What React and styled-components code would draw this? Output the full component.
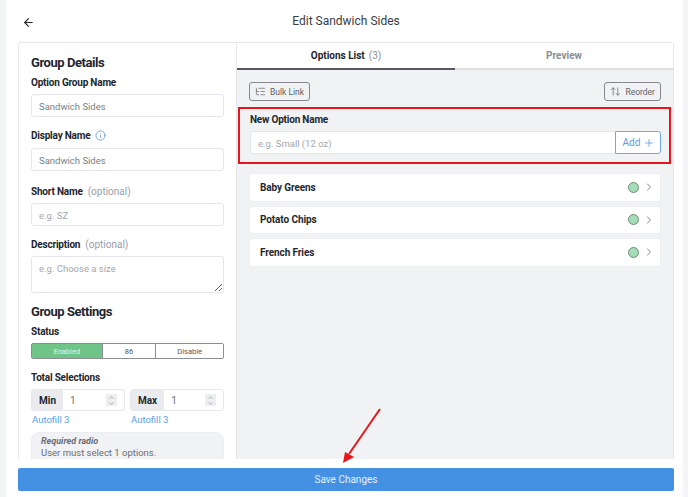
import React from 'react'
import styled, { createGlobalStyle } from 'styled-components'
import { ArrowLeft, ArrowUpDown, ChevronDown, ChevronRight, ChevronUp, Info, ListTree, Plus } from 'lucide-react'

const options = ['Baby Greens', 'Potato Chips', 'French Fries']
const statuses = [
  { label: 'Enabled', grow: 71, active: true },
  { label: '86', grow: 54 },
  { label: 'Disable', grow: 68 },
]

const NumberField = ({ label }) => (
  <NumberBox>
    <Addon>{label}</Addon>
    <NumberInput defaultValue="1" />
    <Spinner>
      <ChevronUp size={7} strokeWidth={2} />
      <ChevronDown size={7} strokeWidth={2} />
    </Spinner>
  </NumberBox>
)

export default function App() {
  return (
    <Page>
      <GlobalStyle />
      <Sheet>
        <Header>
          <BackButton>
            <ArrowLeft size={13} strokeWidth={2} />
          </BackButton>
          <PageTitle>Edit Sandwich Sides</PageTitle>
        </Header>
        <Card>
          <Sidebar>
            <SectionTitle>Group Details</SectionTitle>
            <Label $top={4}>Option Group Name</Label>
            <TextInput defaultValue="Sandwich Sides" />
            <Label $bottom={6}>
              Display Name
              <InfoIcon>
                <Info size={11} strokeWidth={1.6} />
              </InfoIcon>
            </Label>
            <TextInput defaultValue="Sandwich Sides" />
            <Label $top={13}>
              Short Name <Optional>(optional)</Optional>
            </Label>
            <TextInput placeholder="e.g. SZ" />
            <Label>
              Description <Optional>(optional)</Optional>
            </Label>
            <TextArea placeholder="e.g. Choose a size" />
            <SectionTitle $spaced>Group Settings</SectionTitle>
            <Label $top={4}>Status</Label>
            <Segments>
              {statuses.map((s) => (
                <Segment key={s.label} $grow={s.grow} $active={s.active}>
                  {s.label}
                </Segment>
              ))}
            </Segments>
            <Label>Total Selections</Label>
            <NumberRow>
              <NumberColumn>
                <NumberField label="Min" />
                <Autofill>Autofill 3</Autofill>
              </NumberColumn>
              <NumberColumn>
                <NumberField label="Max" />
                <Autofill>Autofill 3</Autofill>
              </NumberColumn>
            </NumberRow>
            <Hint>
              <HintTitle>Required radio</HintTitle>
              <HintText>User must select 1 options.</HintText>
            </Hint>
          </Sidebar>
          <Main>
            <Tabs>
              <Tab $active>
                Options List <TabCount>(3)</TabCount>
              </Tab>
              <Tab>Preview</Tab>
            </Tabs>
            <Toolbar>
              <ToolButton>
                <ListTree size={11} strokeWidth={1.5} />
                Bulk Link
              </ToolButton>
              <ToolButton>
                <ArrowUpDown size={11} strokeWidth={1.5} />
                Reorder
              </ToolButton>
            </Toolbar>
            <NewOption>
              <Label $top={3}>New Option Name</Label>
              <AddRow>
                <AddInput placeholder="e.g. Small (12 oz)" />
                <AddButton>
                  Add
                  <Plus size={12} strokeWidth={1.6} />
                </AddButton>
              </AddRow>
            </NewOption>
            <OptionList>
              {options.map((name) => (
                <OptionRow key={name}>
                  <OptionName>{name}</OptionName>
                  <StatusDot />
                  <RowChevron>
                    <ChevronRight size={12} strokeWidth={1.6} />
                  </RowChevron>
                </OptionRow>
              ))}
            </OptionList>
          </Main>
        </Card>
        <Footer>
          <SaveButton>Save Changes</SaveButton>
        </Footer>
      </Sheet>
      <Annotation width="60" height="70" viewBox="0 0 60 70">
        <line x1="48" y1="8" x2="17" y2="53" stroke="#e8161b" strokeWidth="2" />
        <polygon points="11,62 13,51 22,56" fill="#e8161b" />
      </Annotation>
    </Page>
  )
}

const GlobalStyle = createGlobalStyle`
  html, body {
    margin: 0;
    padding: 0;
    background: #fff;
  }
  * {
    box-sizing: border-box;
  }
`

const Page = styled.div`
  position: relative;
  width: 688px;
  height: 497px;
  overflow: hidden;
  padding: 0 5px 0 6px;
  background: #f4f5f6;
  font-family: Roboto, 'Liberation Sans', sans-serif;
  color: #23262d;
`
const Sheet = styled.div`
  display: flex;
  flex-direction: column;
  height: 100%;
  padding: 0 9px 6px 12px;
  background: #fff;
`
const Header = styled.div`
  position: relative;
  flex: 0 0 42px;
  display: flex;
  align-items: center;
  justify-content: center;
`
const BackButton = styled.span`
  position: absolute;
  left: 4px;
  top: 16px;
  display: flex;
  color: #23262d;
`
const PageTitle = styled.h1`
  margin: 0;
  font-size: 12px;
  font-weight: 400;
  color: #3a3d44;
`
const Card = styled.div`
  flex: 1;
  min-height: 0;
  display: flex;
  overflow: hidden;
  border: 1px solid #e6e8ec;
  border-bottom: 0;
  border-radius: 3px 3px 0 0;
`
const Sidebar = styled.div`
  flex: 0 0 218px;
  padding: 12px 12px 0 12px;
  overflow: hidden;
  border-right: 1px solid #e6e8ec;
`
const SectionTitle = styled.h2`
  margin: ${(p) => (p.$spaced ? '11px' : '0')} 0 0;
  font-size: 13px;
  line-height: 16px;
  letter-spacing: -0.45px;
  font-weight: 700;
  color: #23262d;
`
const Label = styled.div`
  display: flex;
  align-items: center;
  gap: 3px;
  height: 14px;
  margin: ${(p) => p.$top ?? 11}px 0 ${(p) => p.$bottom ?? 5}px;
  font-size: 10px;
  letter-spacing: -0.2px;
  font-weight: 700;
  color: #23262d;
`
const Optional = styled.span`
  margin-left: 2px;
  font-weight: 400;
  letter-spacing: 0;
  color: #9a9ea6;
`
const InfoIcon = styled.span`
  display: flex;
  margin-left: 2px;
  color: #4490e2;
`
const fieldStyle = `
  display: block;
  width: 100%;
  border: 1px solid #e3e6ea;
  border-radius: 3px;
  background: #fff;
  padding: 1px 7px 0;
  outline: none;
  font-family: Roboto, 'Liberation Sans', sans-serif;
  font-size: 9.5px;
  color: #7b7f87;
  &::placeholder {
    color: #a3a7ae;
    opacity: 1;
  }
`
const TextInput = styled.input`
  ${fieldStyle}
  height: 23px;
`
const TextArea = styled.textarea`
  ${fieldStyle}
  height: 37px;
  padding-top: 6px;
`
const Segments = styled.div`
  display: flex;
  height: 16px;
  border: 1px solid #8b8e93;
  border-radius: 2px;
  overflow: hidden;
`
const Segment = styled.div`
  flex: ${(p) => p.$grow} 0 0;
  display: flex;
  align-items: center;
  justify-content: center;
  font-size: 7.5px;
  color: ${(p) => (p.$active ? '#e4f4e8' : '#54575d')};
  background: ${(p) => (p.$active ? '#6fc487' : '#fff')};
  & + & {
    border-left: 1px solid #8b8e93;
  }
`
const NumberRow = styled.div`
  display: flex;
  gap: 5px;
`
const NumberColumn = styled.div`
  flex: 1;
  min-width: 0;
`
const NumberBox = styled.div`
  display: flex;
  align-items: center;
  height: 22px;
  border: 1px solid #e6e8ec;
  border-radius: 3px;
  overflow: hidden;
`
const Addon = styled.span`
  flex: 0 0 auto;
  align-self: stretch;
  display: flex;
  align-items: center;
  padding: 0 7px;
  background: #e9ebee;
  font-size: 10px;
  font-weight: 700;
  color: #23262d;
`
const NumberInput = styled.input`
  flex: 1;
  min-width: 0;
  border: 0;
  outline: none;
  padding: 0 7px;
  font-family: Roboto, 'Liberation Sans', sans-serif;
  font-size: 10px;
  color: #6d7077;
`
const Spinner = styled.span`
  flex: 0 0 11px;
  display: flex;
  flex-direction: column;
  align-items: center;
  margin-right: 7px;
  background: #eceef0;
  color: #7d8087;
  & svg {
    margin: -0.5px 0;
  }
`
const Autofill = styled.div`
  margin-top: 3px;
  padding-left: 1px;
  font-size: 9.5px;
  line-height: 12px;
  color: #5c9ce4;
`
const Hint = styled.div`
  margin-top: 6px;
  padding: 3px 9px 10px;
  background: #f1f2f4;
  border: 1px solid #ecedf0;
  border-radius: 8px;
  color: #6b6e75;
`
const HintTitle = styled.div`
  font-size: 9px;
  line-height: 11px;
  font-style: italic;
  font-weight: 700;
`
const HintText = styled.div`
  font-size: 9.5px;
  line-height: 11.5px;
`
const Main = styled.div`
  flex: 1;
  min-width: 0;
  background: #f1f2f4;
`
const Tabs = styled.div`
  display: flex;
  height: 27px;
  background: #fff;
`
const Tab = styled.div`
  flex: 1;
  display: flex;
  align-items: center;
  justify-content: center;
  gap: 4px;
  font-size: 10px;
  font-weight: 700;
  color: ${(p) => (p.$active ? '#23262d' : '#8b8e94')};
  border-bottom: 2px solid ${(p) => (p.$active ? '#55585f' : '#dcdee2')};
`
const TabCount = styled.span`
  font-weight: 400;
  color: #8b8e94;
`
const Toolbar = styled.div`
  display: flex;
  justify-content: space-between;
  padding: 12px 12px 0;
`
const ToolButton = styled.div`
  display: flex;
  align-items: center;
  gap: 4px;
  height: 19px;
  padding: 0 5px;
  border: 1px solid #85888e;
  border-radius: 3px;
  font-size: 8.5px;
  color: #5f6269;
`
const NewOption = styled.div`
  margin: 6px 2px 0 1px;
  padding: 0 8px 8px 10px;
  border: 2px solid #e8161b;
`
const AddRow = styled.div`
  display: flex;
  height: 23px;
`
const AddInput = styled.input`
  ${fieldStyle}
  flex: 1;
  min-width: 0;
  border-right: 0;
  border-radius: 3px 0 0 3px;
`
const AddButton = styled.div`
  flex: 0 0 46px;
  display: flex;
  align-items: center;
  justify-content: center;
  gap: 3px;
  padding-left: 2px;
  background: #fff;
  border: 1px solid #6fa9ea;
  border-radius: 0 3px 3px 0;
  font-size: 10px;
  color: #5c9ce4;
`
const OptionList = styled.div`
  display: flex;
  flex-direction: column;
  gap: 6px;
  margin: 10px 13px 0;
`
const OptionRow = styled.div`
  display: flex;
  align-items: center;
  height: 26.5px;
  padding: 0 5px 0 10px;
  background: #fff;
  border-radius: 2px;
  box-shadow: 0 0 0 1px #eceef1;
`
const OptionName = styled.span`
  flex: 1;
  font-size: 10px;
  letter-spacing: -0.1px;
  font-weight: 700;
  color: #23262d;
`
const StatusDot = styled.span`
  width: 11px;
  height: 11px;
  border-radius: 50%;
  background: #a3dcb5;
  border: 1px solid #6f8f7a;
`
const RowChevron = styled.span`
  display: flex;
  margin-left: 4px;
  color: #5f6269;
`
const Footer = styled.div`
  flex: 0 0 32px;
  display: flex;
  align-items: flex-end;
  background: #fff;
`
const SaveButton = styled.div`
  flex: 1;
  height: 23px;
  display: flex;
  align-items: center;
  justify-content: center;
  background: #4490e2;
  border-radius: 2px;
  font-size: 10px;
  color: #e6f0fb;
`
const Annotation = styled.svg`
  position: absolute;
  left: 332px;
  top: 401px;
  pointer-events: none;
`
